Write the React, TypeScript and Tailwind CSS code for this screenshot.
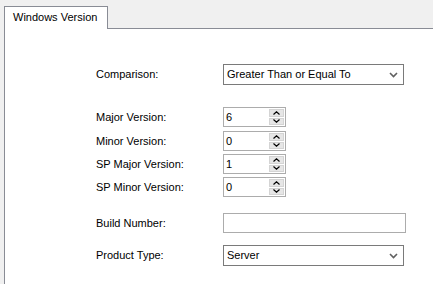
import React from "react";

const Chevron = () => (
  <svg width="9" height="6" viewBox="0 0 9 6" className="block">
    <path d="M1 1 L4.5 4.5 L8 1" fill="none" stroke="#606060" strokeWidth="1.6" />
  </svg>
);

const Up = () => (
  <svg width="7" height="4" viewBox="0 0 7 4" className="block">
    <path d="M0.5 3.5 L3.5 0.8 L6.5 3.5" fill="none" stroke="#000" strokeWidth="1.2" />
  </svg>
);
const Down = () => (
  <svg width="7" height="4" viewBox="0 0 7 4" className="block">
    <path d="M0.5 0.5 L3.5 3.2 L6.5 0.5" fill="none" stroke="#000" strokeWidth="1.2" />
  </svg>
);

const Select = ({ value }: { value: string }) => (
  <div className="w-[181px] h-[21px] border border-[#7a7a7a] bg-white flex items-center pl-[3px] pr-[5px]">
    <span className="flex-1 leading-[13px]">{value}</span>
    <Chevron />
  </div>
);

const UpDown = ({ value }: { value: string }) => (
  <div className="w-[63px] h-[20px] border border-[#acacac] bg-white flex">
    <div className="flex-1 pl-[2px] flex items-center leading-[13px]">{value}</div>
    <div className="w-[16px] flex flex-col gap-px p-px pl-0">
      <div className="flex-1 bg-[#e6e6e6] border border-[#d4d4d4] flex items-center justify-center">
        <Up />
      </div>
      <div className="flex-1 bg-[#e6e6e6] border border-[#d4d4d4] flex items-center justify-center">
        <Down />
      </div>
    </div>
  </div>
);

const Row = ({ label, children, className }: { label: string; children: React.ReactNode; className?: string }) => (
  <div className={"flex items-center " + (className ?? "")}>
    <div className="w-[127px] leading-[13px]">{label}</div>
    {children}
  </div>
);

export default function App() {
  return (
    <div
      className="w-[433px] h-[284px] bg-[#f0f0f0] overflow-hidden text-[11px] text-black flex flex-col"
      style={{ fontFamily: '"Liberation Sans", Arial, sans-serif' }}
    >
      <div className="flex pt-[6px] pl-[4px]">
        <div className="relative z-10 w-[104px] h-[23px] border-t border-l border-r border-[#898c95] bg-white pl-[8px] pt-[4px] leading-[13px]">
          Windows Version
        </div>
      </div>
      <div className="ml-[4px] mt-[-1px] flex-1 border-t border-l border-[#898c95] bg-white pl-[91px] pt-[35px] flex flex-col">
        <Row label="Comparison:">
          <Select value="Greater Than or Equal To" />
        </Row>
        <Row label="Major Version:" className="mt-[22px]">
          <UpDown value="6" />
        </Row>
        <Row label="Minor Version:" className="mt-[4px]">
          <UpDown value="0" />
        </Row>
        <Row label="SP Major Version:" className="mt-[3px]">
          <UpDown value="1" />
        </Row>
        <Row label="SP Minor Version:" className="mt-[3px]">
          <UpDown value="0" />
        </Row>
        <Row label="Build Number:" className="mt-[16px]">
          <div className="w-[183px] h-[20px] border border-[#acacac] bg-white" />
        </Row>
        <Row label="Product Type:" className="mt-[12px]">
          <Select value="Server" />
        </Row>
      </div>
    </div>
  );
}
